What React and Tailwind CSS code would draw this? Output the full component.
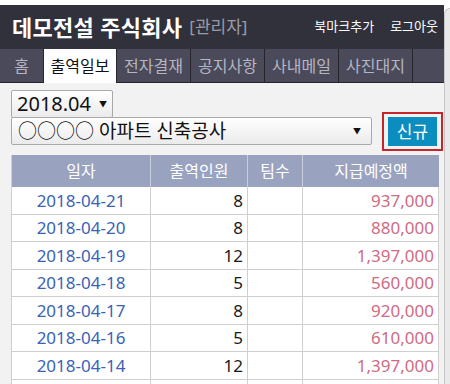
const TABS = ['홈', '출역일보', '전자결재', '공지사항', '사내메일', '사진대지']
const TAB_W = ['w-[44px]', 'w-[73px]', 'w-[74px]', 'w-[74px]', 'w-[74px]', 'w-[74px]']

const ROWS = [
  { date: '2018-04-21', count: 8, amount: '937,000' },
  { date: '2018-04-20', count: 8, amount: '880,000' },
  { date: '2018-04-19', count: 12, amount: '1,397,000' },
  { date: '2018-04-18', count: 5, amount: '560,000' },
  { date: '2018-04-17', count: 8, amount: '920,000' },
  { date: '2018-04-16', count: 5, amount: '610,000' },
  { date: '2018-04-14', count: 12, amount: '1,397,000' },
  { date: '', count: '', amount: '' },
]

const font = { fontFamily: '"Noto Sans", "Noto Sans CJK KR", sans-serif' }

export default function App() {
  return (
    <div className="w-[450px] h-[384px] overflow-hidden bg-white flex" style={font}>
      {/* Main */}
      <div className="w-[444px] flex flex-col pt-[5px]">
        {/* Header */}
        <div className="shrink-0 h-[44px] bg-[#31313b] flex items-center pl-[12px] pr-[6px]">
          <span className="text-[22px] font-bold text-white tracking-[0.3px]">데모전설 주식회사</span>
          <span className="ml-[7px] text-[17px] text-[#9a9aa6]">[관리자]</span>
          <div className="ml-auto flex gap-[16px] text-[13px] text-white">
            <span>북마크추가</span>
            <span>로그아웃</span>
          </div>
        </div>

        {/* Tabs */}
        <div className="shrink-0 h-[34px] bg-[#4a4a5b] flex">
          {TABS.map((t, i) => (
            <div
              key={t}
              className={
                TAB_W[i] + ' flex items-center justify-center text-[16px] border-r border-[#25252c] ' +
                (i === 1 ? 'bg-white text-[#111]' : 'text-[#b6b6c2] border-b')
              }
            >
              {t}
            </div>
          ))}
          <div className="flex-1 border-b border-[#25252c]" />
        </div>

        {/* Content */}
        <div className="flex-1 min-h-0 bg-[#f2f2f2] pl-[11px] pt-[7px]">
          <div className="flex">
            <div className="flex flex-col w-[361px]">
              <div className="w-[102px] h-[28px] flex items-center justify-between px-[5px] border border-[#a9a9a9] rounded-[2px] bg-gradient-to-b from-white to-[#ebebeb]">
                <span className="text-[20px] text-[#111]">2018.04</span>
                <span className="text-[8px] text-[#111]">▼</span>
              </div>
              <div className="-mt-[1px] h-[28px] flex items-center justify-between pl-[6px] pr-[10px] border border-[#a9a9a9] rounded-[2px] bg-gradient-to-b from-white to-[#ebebeb]">
                <span className="text-[19px] text-[#111]">○○○○ 아파트 신축공사</span>
                <span className="text-[8px] text-[#111]">▼</span>
              </div>
            </div>
            <div className="ml-[10px] mt-[22px] w-[61px] h-[39px] border-2 border-[#c8252b] flex items-center justify-center">
              <div className="w-[49px] h-[29px] bg-[#0b8dc0] flex items-center justify-center text-white text-[17px]">
                신규
              </div>
            </div>
          </div>

          {/* Table */}
          <div className="mt-[4px] w-[428px] border-l border-[#cfcfcf]">
            <div className="h-[32px] bg-[#99a3bf] flex text-white text-[16px]">
              <div className="w-[139px] flex items-center justify-center border-r border-[#c9cddc]">일자</div>
              <div className="w-[97px] flex items-center justify-center border-r border-[#c9cddc]">출역인원</div>
              <div className="w-[55px] flex items-center justify-center border-r border-[#c9cddc]">팀수</div>
              <div className="flex-1 flex items-center justify-center">지급예정액</div>
            </div>
            {ROWS.map((r, i) => (
              <div key={i} className="h-[27.5px] flex bg-white border-b border-[#cfcfcf] text-[17px]">
                <div className="w-[139px] flex items-center justify-center text-[#3a62b6] border-r border-[#cfcfcf]">{r.date}</div>
                <div className="w-[97px] flex items-center justify-end pr-[4px] text-[#1a1a1a] border-r border-[#cfcfcf]">{r.count}</div>
                <div className="w-[55px] border-r border-[#cfcfcf]" />
                <div className="flex-1 flex items-center justify-end pr-[4px] text-[#d06b83] border-r border-[#cfcfcf]">{r.amount}</div>
              </div>
            ))}
          </div>
        </div>
      </div>

      {/* Right edge */}
      <div className="flex-1 mt-[8px] bg-[#e9e9e9] border-l border-t border-[#c6c6c6] rounded-tl-[6px]" />
    </div>
  )
}
